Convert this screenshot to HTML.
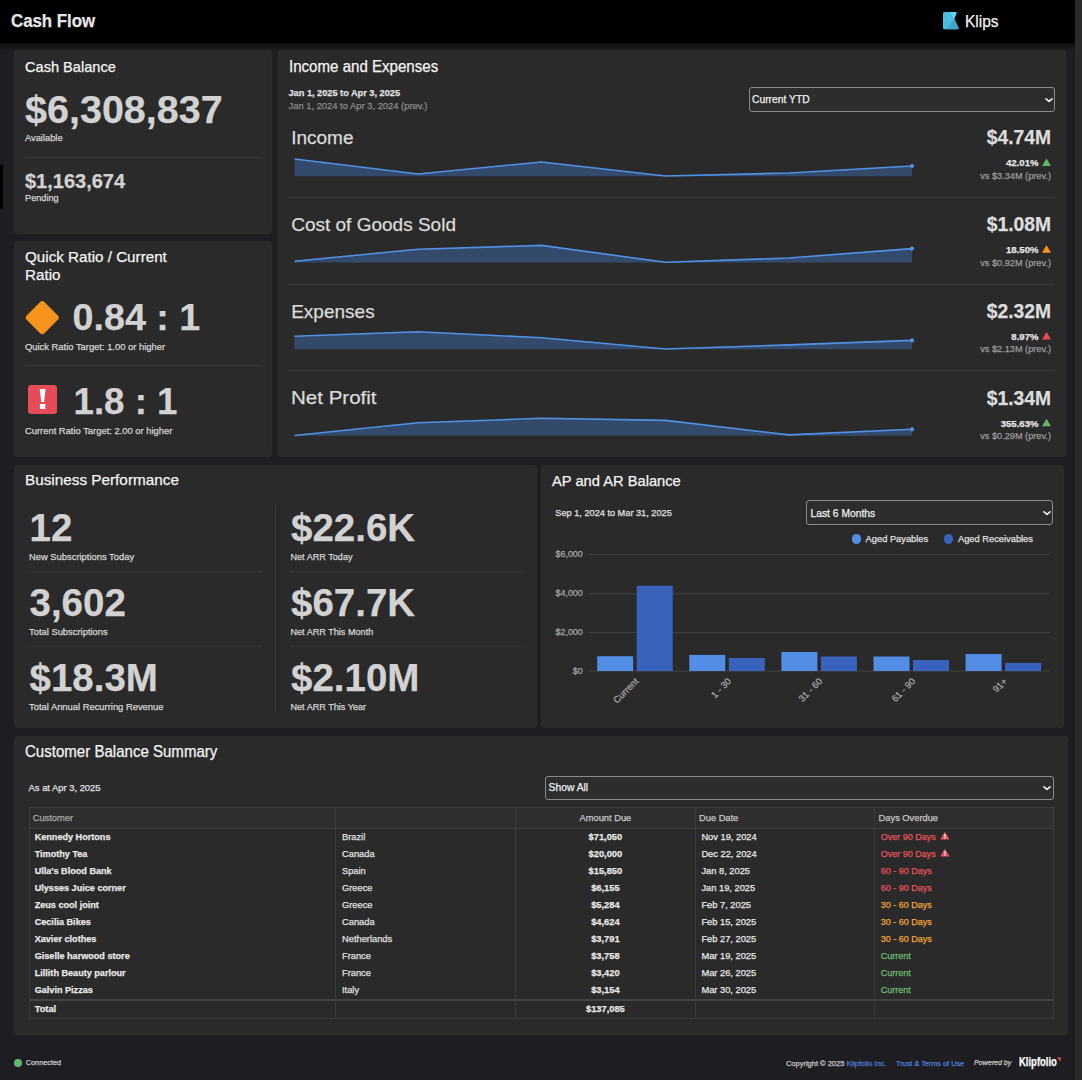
<!DOCTYPE html>
<html><head><meta charset="utf-8"><title>Cash Flow</title>
<style>
html,body{margin:0;padding:0}
body{width:1082px;height:1080px;overflow:hidden;position:relative;background:#1e1d21;font-family:"Liberation Sans",sans-serif}
.t{position:absolute;white-space:nowrap;line-height:1;-webkit-text-stroke:0.25px currentColor}
.b{position:absolute;box-sizing:border-box}
svg.b{overflow:visible}
</style></head><body>
<div class="b" style="left:0px;top:0px;width:1075px;height:43px;background:#000;"></div>
<div class="b" style="left:0px;top:43px;width:1075px;height:8px;background:linear-gradient(#0e0e10, rgba(30,29,33,0));"></div>
<div class="b" style="left:1075px;top:0px;width:7px;height:1080px;background:#2a2a2a;"></div>
<div class="b" style="left:0px;top:165px;width:3px;height:44px;background:#000;"></div>
<div class="t" style="left:11.00px;top:12.02px;font-size:18.4px;font-weight:700;color:#e6e6e6;transform:scaleX(0.915);transform-origin:left top;">Cash Flow</div>
<svg class="b" style="left:942px;top:11px" width="18" height="20" viewBox="0 0 18 20"><path d="M2.5 1 H13.6 Q15 1 14.4 2.3 L12.2 7.8 L16.4 16.6 Q17 18.2 15.2 18.2 H2.5 Q1 18.2 1 16.7 V2.5 Q1 1 2.5 1 Z" fill="#49bcdf"/><path d="M8 1 H13.6 Q15 1 14.4 2.3 L12.2 7.8 Z" fill="#55d9f7"/><path d="M12.2 7.8 L16.4 16.6 Q17 18.2 15.2 18.2 H4.8 Z" fill="#40a5c6"/></svg>
<div class="t" style="left:965.00px;top:13.41px;font-size:17px;font-weight:400;color:#f2f2f2;transform:scaleX(0.91);transform-origin:left top;">Klips</div>
<div class="b" style="left:14px;top:50px;width:258px;height:184px;background:#2a2a2a;border-radius:4px;box-shadow:inset 0 0 0 1px #2d2c2a;"></div>
<div class="b" style="left:14px;top:241px;width:258px;height:216px;background:#2a2a2a;border-radius:4px;box-shadow:inset 0 0 0 1px #2d2c2a;"></div>
<div class="b" style="left:278px;top:50px;width:788px;height:407px;background:#2a2a2a;border-radius:4px;box-shadow:inset 0 0 0 1px #2d2c2a;"></div>
<div class="b" style="left:14px;top:465px;width:523px;height:263px;background:#2a2a2a;border-radius:4px;box-shadow:inset 0 0 0 1px #2d2c2a;"></div>
<div class="b" style="left:541px;top:465px;width:523px;height:263px;background:#2a2a2a;border-radius:4px;box-shadow:inset 0 0 0 1px #2d2c2a;"></div>
<div class="b" style="left:14px;top:736px;width:1054px;height:299px;background:#2a2a2a;border-radius:4px;box-shadow:inset 0 0 0 1px #2d2c2a;"></div>
<div class="t" style="left:25.00px;top:60.24px;font-size:14.6px;font-weight:400;color:#f4f4f4;">Cash Balance</div>
<div class="t" style="left:25.00px;top:89.86px;font-size:39.5px;font-weight:700;color:#d2d2d2;">$6,308,837</div>
<div class="t" style="left:25.00px;top:134.33px;font-size:9.3px;font-weight:400;color:#d6d6d6;">Available</div>
<div class="b" style="left:25px;top:157px;width:236px;height:1px;background:#3a3a3a;"></div>
<div class="t" style="left:25.00px;top:171.17px;font-size:20px;font-weight:700;color:#d2d2d2;">$1,163,674</div>
<div class="t" style="left:25.00px;top:194.31px;font-size:9.2px;font-weight:400;color:#d6d6d6;">Pending</div>
<div class="t" style="left:25.00px;top:249.03px;font-size:15.2px;font-weight:400;color:#f4f4f4;">Quick Ratio / Current</div>
<div class="t" style="left:25.00px;top:267.03px;font-size:15.2px;font-weight:400;color:#f4f4f4;">Ratio</div>
<div class="b" style="left:30.25px;top:304.75px;width:24.5px;height:24.5px;background:#f7941d;border-radius:3px;transform:rotate(45deg)"></div>
<div class="t" style="left:72.50px;top:299.49px;font-size:37.7px;font-weight:700;color:#d2d2d2;">0.84 : 1</div>
<div class="t" style="left:25.00px;top:342.44px;font-size:9.4px;font-weight:400;color:#d6d6d6;">Quick Ratio Target: 1.00 or higher</div>
<div class="b" style="left:25px;top:365px;width:236px;height:1px;background:#3a3a3a;"></div>
<div class="b" style="left:28px;top:385px;width:29px;height:29px;background:#e64c57;border-radius:3px"></div>
<svg class="b" style="left:0;top:0" width="80" height="420"><polygon points="39.7,389 45.5,389 44.2,402 41.2,402" fill="#fff"/><rect x="39.9" y="404" width="5.4" height="5" fill="#fff"/></svg>
<div class="t" style="left:73.50px;top:383.63px;font-size:36.7px;font-weight:700;color:#d2d2d2;">1.8 : 1</div>
<div class="t" style="left:25.00px;top:425.94px;font-size:9.4px;font-weight:400;color:#d6d6d6;">Current Ratio Target: 2.00 or higher</div>
<div class="t" style="left:288.50px;top:59.09px;font-size:15.6px;font-weight:400;color:#f4f4f4;transform:scaleX(0.967);transform-origin:left top;">Income and Expenses</div>
<div class="t" style="left:288.50px;top:88.81px;font-size:9.2px;font-weight:700;color:#e0e0e0;">Jan 1, 2025 to Apr 3, 2025</div>
<div class="t" style="left:288.50px;top:100.64px;font-size:9.4px;font-weight:400;color:#8c8c8c;">Jan 1, 2024 to Apr 3, 2024 (prev.)</div>
<div class="b" style="left:749px;top:87px;width:306px;height:25px;border:1px solid #8a8a8a;border-radius:3px;background:#2d2d2d"></div>
<div class="t" style="left:752.00px;top:94.88px;font-size:10.3px;font-weight:400;color:#f0f0f0;">Current YTD</div>
<svg class="b" style="left:1044.5px;top:96.5px" width="8" height="6" viewBox="0 0 8 6"><path d="M1 1.8 L4 4.3 L7 1.8" stroke="#ececec" stroke-width="1.7" fill="none" stroke-linecap="round" stroke-linejoin="round"/></svg>
<div class="t" style="left:291.20px;top:128.32px;font-size:19px;font-weight:400;color:#dadada;">Income</div>
<div class="t" style="right:31.00px;top:128.26px;font-size:19.3px;font-weight:700;color:#dcdcdc;">$4.74M</div>
<div class="t" style="right:43.50px;top:158.27px;font-size:9.6px;font-weight:700;color:#e6e6e6;">42.01%</div>
<div class="t" style="right:31.00px;top:171.91px;font-size:9.2px;font-weight:400;color:#9c9c9c;">vs $3.34M (prev.)</div>
<div class="b" style="left:288px;top:197px;width:767px;height:1px;background:#3a3a3a;"></div>
<div class="t" style="left:291.20px;top:215.32px;font-size:19px;font-weight:400;color:#dadada;">Cost of Goods Sold</div>
<div class="t" style="right:31.00px;top:215.01px;font-size:19.3px;font-weight:700;color:#dcdcdc;">$1.08M</div>
<div class="t" style="right:43.50px;top:245.02px;font-size:9.6px;font-weight:700;color:#e6e6e6;">18.50%</div>
<div class="t" style="right:31.00px;top:258.66px;font-size:9.2px;font-weight:400;color:#9c9c9c;">vs $0.92M (prev.)</div>
<div class="b" style="left:288px;top:284px;width:767px;height:1px;background:#3a3a3a;"></div>
<div class="t" style="left:291.20px;top:301.82px;font-size:19px;font-weight:400;color:#dadada;">Expenses</div>
<div class="t" style="right:31.00px;top:301.76px;font-size:19.3px;font-weight:700;color:#dcdcdc;">$2.32M</div>
<div class="t" style="right:43.50px;top:331.77px;font-size:9.6px;font-weight:700;color:#e6e6e6;">8.97%</div>
<div class="t" style="right:31.00px;top:345.41px;font-size:9.2px;font-weight:400;color:#9c9c9c;">vs $2.13M (prev.)</div>
<div class="b" style="left:288px;top:370px;width:767px;height:1px;background:#3a3a3a;"></div>
<div class="t" style="left:291.20px;top:388.32px;font-size:19px;font-weight:400;color:#dadada;transform:scaleX(1.08);transform-origin:left top;">Net Profit</div>
<div class="t" style="right:31.00px;top:388.51px;font-size:19.3px;font-weight:700;color:#dcdcdc;">$1.34M</div>
<div class="t" style="right:43.50px;top:418.52px;font-size:9.6px;font-weight:700;color:#e6e6e6;">355.63%</div>
<div class="t" style="right:31.00px;top:432.16px;font-size:9.2px;font-weight:400;color:#9c9c9c;">vs $0.29M (prev.)</div>
<svg class="b" style="left:0;top:0" width="1082" height="1080" viewBox="0 0 1082 1080">
<polygon points="294.5,176.2 294.5,159 418.0,174 541.5,162 665.5,176 789.0,173 912.0,166 912.0,176.2" fill="#344a6b"/>
<polyline points="294.5,159 418.0,174 541.5,162 665.5,176 789.0,173 912.0,166" fill="none" stroke="#5092e6" stroke-width="1.6" stroke-linejoin="round"/>
<circle cx="912.0" cy="166" r="2.1" fill="#5092e6"/>
<polygon points="1042.0,166.0 1046.5,158.5 1051,166.0" fill="#5fb86a"/>
<polygon points="294.5,262.5 294.5,261.3 418.0,249.2 541.5,245.4 665.5,262.3 789.0,258 912.0,248.6 912.0,262.5" fill="#344a6b"/>
<polyline points="294.5,261.3 418.0,249.2 541.5,245.4 665.5,262.3 789.0,258 912.0,248.6" fill="none" stroke="#5092e6" stroke-width="1.6" stroke-linejoin="round"/>
<circle cx="912.0" cy="248.6" r="2.1" fill="#5092e6"/>
<polygon points="1042.0,252.75 1046.5,245.25 1051,252.75" fill="#f7941d"/>
<polygon points="294.5,349.3 294.5,336.3 418.0,331.8 541.5,337.8 665.5,349 789.0,344.9 912.0,340.4 912.0,349.3" fill="#344a6b"/>
<polyline points="294.5,336.3 418.0,331.8 541.5,337.8 665.5,349 789.0,344.9 912.0,340.4" fill="none" stroke="#5092e6" stroke-width="1.6" stroke-linejoin="round"/>
<circle cx="912.0" cy="340.4" r="2.1" fill="#5092e6"/>
<polygon points="1042.0,339.5 1046.5,332.0 1051,339.5" fill="#e64c57"/>
<polygon points="294.5,435.8 294.5,435.5 418.0,422.8 541.5,418.3 665.5,420.4 789.0,434.9 912.0,429.3 912.0,435.8" fill="#344a6b"/>
<polyline points="294.5,435.5 418.0,422.8 541.5,418.3 665.5,420.4 789.0,434.9 912.0,429.3" fill="none" stroke="#5092e6" stroke-width="1.6" stroke-linejoin="round"/>
<circle cx="912.0" cy="429.3" r="2.1" fill="#5092e6"/>
<polygon points="1042.0,426.25 1046.5,418.75 1051,426.25" fill="#5fb86a"/>
</svg>
<div class="t" style="left:25.00px;top:472.05px;font-size:15.3px;font-weight:400;color:#f4f4f4;">Business Performance</div>
<div class="b" style="left:275px;top:505px;width:1px;height:207px;background:repeating-linear-gradient(180deg,#383838 0 2px,#303030 2px 3px);"></div>
<div class="t" style="left:29.50px;top:508.81px;font-size:38.5px;font-weight:700;color:#d2d2d2;">12</div>
<div class="t" style="left:29.00px;top:552.44px;font-size:9.4px;font-weight:400;color:#d6d6d6;">New Subscriptions Today</div>
<div class="t" style="left:291.00px;top:508.81px;font-size:38.5px;font-weight:700;color:#d2d2d2;">$22.6K</div>
<div class="t" style="left:290.50px;top:552.70px;font-size:9.1px;font-weight:400;color:#d6d6d6;">Net ARR Today</div>
<div class="b" style="left:29px;top:571px;width:233px;height:1px;background:repeating-linear-gradient(90deg,#383838 0 2px,#303030 2px 3px);"></div>
<div class="b" style="left:290px;top:571px;width:233px;height:1px;background:repeating-linear-gradient(90deg,#383838 0 2px,#303030 2px 3px);"></div>
<div class="t" style="left:29.50px;top:583.81px;font-size:38.5px;font-weight:700;color:#d2d2d2;">3,602</div>
<div class="t" style="left:29.00px;top:627.44px;font-size:9.4px;font-weight:400;color:#d6d6d6;">Total Subscriptions</div>
<div class="t" style="left:291.00px;top:583.81px;font-size:38.5px;font-weight:700;color:#d2d2d2;">$67.7K</div>
<div class="t" style="left:290.50px;top:627.70px;font-size:9.1px;font-weight:400;color:#d6d6d6;">Net ARR This Month</div>
<div class="b" style="left:29px;top:646px;width:233px;height:1px;background:repeating-linear-gradient(90deg,#383838 0 2px,#303030 2px 3px);"></div>
<div class="b" style="left:290px;top:646px;width:233px;height:1px;background:repeating-linear-gradient(90deg,#383838 0 2px,#303030 2px 3px);"></div>
<div class="t" style="left:29.50px;top:658.81px;font-size:38.5px;font-weight:700;color:#d2d2d2;">$18.3M</div>
<div class="t" style="left:29.00px;top:702.44px;font-size:9.4px;font-weight:400;color:#d6d6d6;">Total Annual Recurring Revenue</div>
<div class="t" style="left:291.00px;top:658.81px;font-size:38.5px;font-weight:700;color:#d2d2d2;">$2.10M</div>
<div class="t" style="left:290.50px;top:702.70px;font-size:9.1px;font-weight:400;color:#d6d6d6;">Net ARR This Year</div>
<div class="t" style="left:552.00px;top:474.16px;font-size:14.7px;font-weight:400;color:#f4f4f4;">AP and AR Balance</div>
<div class="t" style="left:555.30px;top:508.61px;font-size:9.2px;font-weight:400;color:#e0e0e0;">Sep 1, 2024 to Mar 31, 2025</div>
<div class="b" style="left:806px;top:500px;width:247px;height:25px;border:1px solid #8a8a8a;border-radius:3px;background:#2d2d2d"></div>
<div class="t" style="left:810.50px;top:508.68px;font-size:10.3px;font-weight:400;color:#f0f0f0;">Last 6 Months</div>
<svg class="b" style="left:1042.5px;top:510px" width="8" height="6" viewBox="0 0 8 6"><path d="M1 1.8 L4 4.3 L7 1.8" stroke="#ececec" stroke-width="1.7" fill="none" stroke-linecap="round" stroke-linejoin="round"/></svg>
<div class="b" style="left:851.5px;top:534px;width:9.5px;height:9.5px;border-radius:50%;background:#528ee6"></div>
<div class="t" style="left:865.60px;top:534.93px;font-size:9.3px;font-weight:400;color:#e0e0e0;">Aged Payables</div>
<div class="b" style="left:943.8px;top:534px;width:9.5px;height:9.5px;border-radius:50%;background:#3862bc"></div>
<div class="t" style="left:958.00px;top:534.93px;font-size:9.3px;font-weight:400;color:#e0e0e0;">Aged Receivables</div>
<div class="t" style="right:499.30px;top:549.97px;font-size:8.9px;font-weight:400;color:#a8a8a8;">$6,000</div>
<div class="t" style="right:499.30px;top:589.27px;font-size:8.9px;font-weight:400;color:#a8a8a8;">$4,000</div>
<div class="t" style="right:499.30px;top:627.97px;font-size:8.9px;font-weight:400;color:#a8a8a8;">$2,000</div>
<div class="t" style="right:499.30px;top:666.67px;font-size:8.9px;font-weight:400;color:#a8a8a8;">$0</div>
<svg class="b" style="left:0;top:0" width="1082" height="1080" viewBox="0 0 1082 1080">
<line x1="588.7" y1="554.5" x2="1049.5" y2="554.5" stroke="#404040" stroke-width="1"/>
<line x1="588.7" y1="593.8" x2="1049.5" y2="593.8" stroke="#404040" stroke-width="1"/>
<line x1="588.7" y1="632.5" x2="1049.5" y2="632.5" stroke="#404040" stroke-width="1"/>
<line x1="588.7" y1="671.2" x2="1049.5" y2="671.2" stroke="#404040" stroke-width="1"/>
<rect x="597.20" y="656.2" width="36" height="14.80" fill="#528ee6"/>
<rect x="636.70" y="585.8" width="36" height="85.20" fill="#3862bc"/>
<rect x="689.30" y="654.9" width="36" height="16.10" fill="#528ee6"/>
<rect x="728.80" y="658" width="36" height="13.00" fill="#3862bc"/>
<rect x="781.40" y="652" width="36" height="19.00" fill="#528ee6"/>
<rect x="820.90" y="656.5" width="36" height="14.50" fill="#3862bc"/>
<rect x="873.50" y="656.5" width="36" height="14.50" fill="#528ee6"/>
<rect x="913.00" y="660" width="36" height="11.00" fill="#3862bc"/>
<rect x="965.60" y="654" width="36" height="17.00" fill="#528ee6"/>
<rect x="1005.10" y="662.9" width="36" height="8.10" fill="#3862bc"/>
</svg>
<div class="t" style="right:447.80px;top:676.7px;font-size:9.3px;color:#a8a8a8;transform:rotate(-45deg);transform-origin:right top">Current</div>
<div class="t" style="right:355.70px;top:676.7px;font-size:9.3px;color:#a8a8a8;transform:rotate(-45deg);transform-origin:right top">1 - 30</div>
<div class="t" style="right:263.60px;top:676.7px;font-size:9.3px;color:#a8a8a8;transform:rotate(-45deg);transform-origin:right top">31 - 60</div>
<div class="t" style="right:171.50px;top:676.7px;font-size:9.3px;color:#a8a8a8;transform:rotate(-45deg);transform-origin:right top">61 - 90</div>
<div class="t" style="right:79.40px;top:676.7px;font-size:9.3px;color:#a8a8a8;transform:rotate(-45deg);transform-origin:right top">91+</div>
<div class="t" style="left:25.00px;top:744.09px;font-size:15.6px;font-weight:400;color:#f4f4f4;transform:scaleX(0.965);transform-origin:left top;">Customer Balance Summary</div>
<div class="t" style="left:28.60px;top:782.64px;font-size:9.4px;font-weight:400;color:#e0e0e0;">As at Apr 3, 2025</div>
<div class="b" style="left:545px;top:776px;width:509px;height:24px;border:1px solid #8a8a8a;border-radius:3px;background:#2d2d2d"></div>
<div class="t" style="left:548.60px;top:783.18px;font-size:10.3px;font-weight:400;color:#f0f0f0;">Show All</div>
<svg class="b" style="left:1043.4px;top:785px" width="8" height="6" viewBox="0 0 8 6"><path d="M1 1.8 L4 4.3 L7 1.8" stroke="#ececec" stroke-width="1.7" fill="none" stroke-linecap="round" stroke-linejoin="round"/></svg>
<div class="b" style="left:30px;top:808px;width:1023px;height:20px;background:#2e2e2e;"></div>
<div class="b" style="left:29px;top:807px;width:1025px;height:212px;border:1px solid #3c3c3c;"></div>
<div class="b" style="left:30px;top:828px;width:1023px;height:1px;background:#3c3c3c;"></div>
<div class="b" style="left:30px;top:999px;width:1023px;height:2px;background:#444;"></div>
<div class="b" style="left:335px;top:808px;width:1px;height:210px;background:#3c3c3c;"></div>
<div class="b" style="left:515px;top:808px;width:1px;height:210px;background:#3c3c3c;"></div>
<div class="b" style="left:695px;top:808px;width:1px;height:210px;background:#3c3c3c;"></div>
<div class="b" style="left:874px;top:808px;width:1px;height:210px;background:#3c3c3c;"></div>
<div class="t" style="left:32.70px;top:813.53px;font-size:9.3px;font-weight:400;color:#a8a8a8;">Customer</div>
<div class="t" style="left:605.40px;transform:translateX(-50%);top:813.53px;font-size:9.3px;font-weight:400;color:#c8c8c8;">Amount Due</div>
<div class="t" style="left:699.00px;top:813.53px;font-size:9.3px;font-weight:400;color:#c8c8c8;">Due Date</div>
<div class="t" style="left:878.60px;top:813.53px;font-size:9.3px;font-weight:400;color:#c8c8c8;">Days Overdue</div>
<div class="t" style="left:34.70px;top:832.90px;font-size:9.1px;font-weight:700;color:#e8e8e8;">Kennedy Hortons</div>
<div class="t" style="left:342.00px;top:832.73px;font-size:9.3px;font-weight:400;color:#e0e0e0;">Brazil</div>
<div class="t" style="left:605.40px;transform:translateX(-50%);top:832.73px;font-size:9.3px;font-weight:700;color:#e8e8e8;">$71,050</div>
<div class="t" style="left:701.40px;top:832.73px;font-size:9.3px;font-weight:400;color:#e8e8e8;">Nov 19, 2024</div>
<div class="t" style="left:880.70px;top:832.98px;font-size:9.0px;font-weight:400;color:#e5535c;">Over 90 Days</div>
<svg class="b" style="left:939.5px;top:832.00px" width="10" height="8" viewBox="0 0 10 8"><path d="M4.3 0.6 Q4.8 -0.1 5.3 0.6 L9.4 7 Q9.7 7.6 9 7.6 H0.8 Q0.1 7.6 0.5 7 Z" fill="#e5535c"/><rect x="4.35" y="2.2" width="1.1" height="3.2" fill="#fff"/><rect x="4.35" y="6" width="1.1" height="1" fill="#fff"/></svg>
<div class="t" style="left:34.70px;top:849.90px;font-size:9.1px;font-weight:700;color:#e8e8e8;">Timothy Tea</div>
<div class="t" style="left:342.00px;top:849.73px;font-size:9.3px;font-weight:400;color:#e0e0e0;">Canada</div>
<div class="t" style="left:605.40px;transform:translateX(-50%);top:849.73px;font-size:9.3px;font-weight:700;color:#e8e8e8;">$20,000</div>
<div class="t" style="left:701.40px;top:849.73px;font-size:9.3px;font-weight:400;color:#e8e8e8;">Dec 22, 2024</div>
<div class="t" style="left:880.70px;top:849.98px;font-size:9.0px;font-weight:400;color:#e5535c;">Over 90 Days</div>
<svg class="b" style="left:939.5px;top:849.00px" width="10" height="8" viewBox="0 0 10 8"><path d="M4.3 0.6 Q4.8 -0.1 5.3 0.6 L9.4 7 Q9.7 7.6 9 7.6 H0.8 Q0.1 7.6 0.5 7 Z" fill="#e5535c"/><rect x="4.35" y="2.2" width="1.1" height="3.2" fill="#fff"/><rect x="4.35" y="6" width="1.1" height="1" fill="#fff"/></svg>
<div class="t" style="left:34.70px;top:866.90px;font-size:9.1px;font-weight:700;color:#e8e8e8;">Ulla's Blood Bank</div>
<div class="t" style="left:342.00px;top:866.73px;font-size:9.3px;font-weight:400;color:#e0e0e0;">Spain</div>
<div class="t" style="left:605.40px;transform:translateX(-50%);top:866.73px;font-size:9.3px;font-weight:700;color:#e8e8e8;">$15,850</div>
<div class="t" style="left:701.40px;top:866.73px;font-size:9.3px;font-weight:400;color:#e8e8e8;">Jan 8, 2025</div>
<div class="t" style="left:880.70px;top:866.98px;font-size:9.0px;font-weight:400;color:#e5535c;">60 - 90 Days</div>
<div class="t" style="left:34.70px;top:883.90px;font-size:9.1px;font-weight:700;color:#e8e8e8;">Ulysses Juice corner</div>
<div class="t" style="left:342.00px;top:883.73px;font-size:9.3px;font-weight:400;color:#e0e0e0;">Greece</div>
<div class="t" style="left:605.40px;transform:translateX(-50%);top:883.73px;font-size:9.3px;font-weight:700;color:#e8e8e8;">$6,155</div>
<div class="t" style="left:701.40px;top:883.73px;font-size:9.3px;font-weight:400;color:#e8e8e8;">Jan 19, 2025</div>
<div class="t" style="left:880.70px;top:883.98px;font-size:9.0px;font-weight:400;color:#e5535c;">60 - 90 Days</div>
<div class="t" style="left:34.70px;top:900.90px;font-size:9.1px;font-weight:700;color:#e8e8e8;">Zeus cool joint</div>
<div class="t" style="left:342.00px;top:900.73px;font-size:9.3px;font-weight:400;color:#e0e0e0;">Greece</div>
<div class="t" style="left:605.40px;transform:translateX(-50%);top:900.73px;font-size:9.3px;font-weight:700;color:#e8e8e8;">$5,284</div>
<div class="t" style="left:701.40px;top:900.73px;font-size:9.3px;font-weight:400;color:#e8e8e8;">Feb 7, 2025</div>
<div class="t" style="left:880.70px;top:900.98px;font-size:9.0px;font-weight:400;color:#f0a43a;">30 - 60 Days</div>
<div class="t" style="left:34.70px;top:917.90px;font-size:9.1px;font-weight:700;color:#e8e8e8;">Cecilia Bikes</div>
<div class="t" style="left:342.00px;top:917.73px;font-size:9.3px;font-weight:400;color:#e0e0e0;">Canada</div>
<div class="t" style="left:605.40px;transform:translateX(-50%);top:917.73px;font-size:9.3px;font-weight:700;color:#e8e8e8;">$4,624</div>
<div class="t" style="left:701.40px;top:917.73px;font-size:9.3px;font-weight:400;color:#e8e8e8;">Feb 15, 2025</div>
<div class="t" style="left:880.70px;top:917.98px;font-size:9.0px;font-weight:400;color:#f0a43a;">30 - 60 Days</div>
<div class="t" style="left:34.70px;top:934.90px;font-size:9.1px;font-weight:700;color:#e8e8e8;">Xavier clothes</div>
<div class="t" style="left:342.00px;top:934.73px;font-size:9.3px;font-weight:400;color:#e0e0e0;">Netherlands</div>
<div class="t" style="left:605.40px;transform:translateX(-50%);top:934.73px;font-size:9.3px;font-weight:700;color:#e8e8e8;">$3,791</div>
<div class="t" style="left:701.40px;top:934.73px;font-size:9.3px;font-weight:400;color:#e8e8e8;">Feb 27, 2025</div>
<div class="t" style="left:880.70px;top:934.98px;font-size:9.0px;font-weight:400;color:#f0a43a;">30 - 60 Days</div>
<div class="t" style="left:34.70px;top:951.90px;font-size:9.1px;font-weight:700;color:#e8e8e8;">Giselle harwood store</div>
<div class="t" style="left:342.00px;top:951.73px;font-size:9.3px;font-weight:400;color:#e0e0e0;">France</div>
<div class="t" style="left:605.40px;transform:translateX(-50%);top:951.73px;font-size:9.3px;font-weight:700;color:#e8e8e8;">$3,758</div>
<div class="t" style="left:701.40px;top:951.73px;font-size:9.3px;font-weight:400;color:#e8e8e8;">Mar 19, 2025</div>
<div class="t" style="left:880.70px;top:951.98px;font-size:9.0px;font-weight:400;color:#6dbb72;">Current</div>
<div class="t" style="left:34.70px;top:968.90px;font-size:9.1px;font-weight:700;color:#e8e8e8;">Lillith Beauty parlour</div>
<div class="t" style="left:342.00px;top:968.73px;font-size:9.3px;font-weight:400;color:#e0e0e0;">France</div>
<div class="t" style="left:605.40px;transform:translateX(-50%);top:968.73px;font-size:9.3px;font-weight:700;color:#e8e8e8;">$3,420</div>
<div class="t" style="left:701.40px;top:968.73px;font-size:9.3px;font-weight:400;color:#e8e8e8;">Mar 26, 2025</div>
<div class="t" style="left:880.70px;top:968.98px;font-size:9.0px;font-weight:400;color:#6dbb72;">Current</div>
<div class="t" style="left:34.70px;top:985.90px;font-size:9.1px;font-weight:700;color:#e8e8e8;">Galvin Pizzas</div>
<div class="t" style="left:342.00px;top:985.73px;font-size:9.3px;font-weight:400;color:#e0e0e0;">Italy</div>
<div class="t" style="left:605.40px;transform:translateX(-50%);top:985.73px;font-size:9.3px;font-weight:700;color:#e8e8e8;">$3,154</div>
<div class="t" style="left:701.40px;top:985.73px;font-size:9.3px;font-weight:400;color:#e8e8e8;">Mar 30, 2025</div>
<div class="t" style="left:880.70px;top:985.98px;font-size:9.0px;font-weight:400;color:#6dbb72;">Current</div>
<div class="t" style="left:34.70px;top:1004.93px;font-size:9.3px;font-weight:700;color:#e8e8e8;">Total</div>
<div class="t" style="left:605.40px;transform:translateX(-50%);top:1004.93px;font-size:9.3px;font-weight:700;color:#e8e8e8;">$137,085</div>
<div class="b" style="left:14px;top:1058.8px;width:7.8px;height:7.8px;border-radius:50%;background:#5fb86a"></div>
<div class="t" style="left:25.80px;top:1058.92px;font-size:7.3px;font-weight:400;color:#c8c8c8;">Connected</div>
<div class="t" style="left:785.90px;top:1060.05px;font-size:7.5px;font-weight:400;color:#c8c8c8;">Copyright © 2025</div>
<div class="t" style="left:846.40px;top:1060.14px;font-size:7.4px;font-weight:400;color:#4d7fd6;">Klipfolio Inc.</div>
<div class="t" style="left:896.00px;top:1060.22px;font-size:7.3px;font-weight:400;color:#4d7fd6;">Trust &amp; Terms of Use</div>
<div class="t" style="left:973.90px;top:1060.39px;font-size:7.1px;font-weight:400;color:#c8c8c8;font-style:italic;">Powered by</div>
<div class="t" style="left:1019.20px;top:1056.24px;font-size:12px;font-weight:700;color:#ffffff;transform:scaleX(0.79);transform-origin:left top;">Klipfolio</div>
<svg class="b" style="left:1056px;top:1056.5px" width="6" height="5"><path d="M0.6 0.5 H4.8 V4.4 L3.4 3 L2.2 1.9 Z" fill="#e5535c"/></svg>
</body></html>
